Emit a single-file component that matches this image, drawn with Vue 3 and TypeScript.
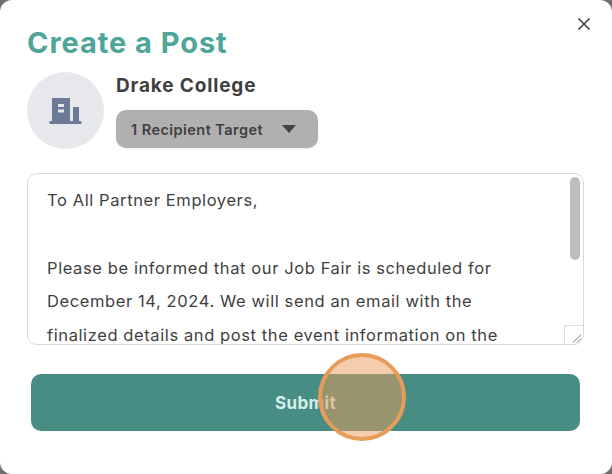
<script setup lang="ts">
const lines: string[] = [
  'To All Partner Employers,',
  '\u00a0',
  'Please be informed that our Job Fair is scheduled for',
  'December 14, 2024. We will send an email with the',
  'finalized details and post the event information on the',
]
</script>

<template>
  <div class="backdrop">
    <section class="modal">
      <button class="close" aria-label="Close">
        <svg width="14" height="14" viewBox="0 0 14 14"><path d="M1.5 1.5 12.5 12.5M12.5 1.5 1.5 12.5" stroke="#444" stroke-width="1.7" fill="none" /></svg>
      </button>
      <h1 class="title">Create a Post</h1>
      <div class="sender">
        <div class="avatar">
          <svg width="33" height="26" viewBox="0 0 33 26">
            <path fill-rule="evenodd" fill="#6b7a96" d="M3 0h18v23H3zM9 6v3h6V6zM9 11.500v3h6v-3z" />
            <rect x="24" y="9" width="6" height="14" fill="#6b7a96" />
            <rect x="0.500" y="23" width="32" height="3" rx="0.500" fill="#6b7a96" />
          </svg>
        </div>
        <div class="who">
          <div class="name">Drake College</div>
          <div class="target">
            <span>1 Recipient Target</span>
            <svg width="14" height="8" viewBox="0 0 14 8"><path d="M0 0h14L7 8z" fill="#444" /></svg>
          </div>
        </div>
      </div>
      <div class="message">
        <p v-for="(line, i) in lines" :key="i">{{ line }}</p>
        <div class="thumb"></div>
        <div class="grip">
          <svg width="18" height="18" viewBox="0 0 18 18"><path d="M8 16.500 16 8.500M12 16.500 16 12.500" stroke="#777" stroke-width="1" fill="none" /></svg>
        </div>
      </div>
      <button class="submit">Submit</button>
      <div class="pointer"></div>
    </section>
  </div>
</template>

<style>
html, body { margin: 0; background: #777; }
</style>

<style scoped>
.backdrop {
  width: 612px;
  height: 474px;
  overflow: hidden;
  background: #6e6e6e;
  font-family: "Inter", "Liberation Sans", sans-serif;
}
.modal {
  position: relative;
  box-sizing: border-box;
  height: 474px;
  padding: 24px 28px 0 27px;
  background: #fff;
  border-radius: 12px;
}
.close {
  position: absolute;
  top: 17px;
  right: 21px;
  padding: 0;
  border: 0;
  background: none;
  line-height: 0;
}
.title {
  margin: 0;
  height: 38px;
  color: #4fa598;
  font-size: 29px;
  line-height: 38px;
  font-weight: 700;
  letter-spacing: 0.95px;
}
.sender {
  display: flex;
  gap: 12px;
  margin-top: 10px;
}
.avatar {
  display: flex;
  align-items: center;
  justify-content: center;
  width: 77px;
  height: 77px;
  box-sizing: border-box;
  border-radius: 50%;
  background: #e7e8ec;
}
.who {
  display: flex;
  flex-direction: column;
  padding-top: 2px;
}
.name {
  height: 26px;
  color: #3f3f3f;
  font-size: 19px;
  line-height: 24px;
  font-weight: 700;
  letter-spacing: 0.85px;
  margin-bottom: 10px;
}
.target {
  display: flex;
  align-items: center;
  justify-content: space-between;
  box-sizing: border-box;
  width: 202px;
  height: 38px;
  padding: 0 22px 0 15px;
  border-radius: 10px;
  background: #b0b0b0;
  box-shadow: 0 1px 2px rgba(0, 0, 0, 0.08);
  color: #3f3f3f;
  font-size: 14.5px;
  font-weight: 600;
  letter-spacing: 0.45px;
}
.message {
  position: relative;
  box-sizing: border-box;
  height: 172px;
  margin-top: 24px;
  padding: 10px 19px 0 19px;
  overflow: hidden;
  border: 1px solid #d8d8d8;
  border-radius: 10px;
  color: #3f3f3f;
  font-size: 16.5px;
  letter-spacing: 0.6px;
}
.message p {
  margin: 0;
  height: 33.75px;
  line-height: 33.75px;
  white-space: nowrap;
}
.thumb {
  position: absolute;
  top: 3px;
  right: 3px;
  width: 10px;
  height: 83px;
  border-radius: 5px;
  background: #bdbdbd;
}
.grip {
  position: absolute;
  right: 0;
  bottom: 0;
  width: 18px;
  height: 18px;
  border-top: 1px solid #dcdcdc;
  border-left: 1px solid #dcdcdc;
  background: #fff;
  line-height: 0;
}
.submit {
  display: block;
  width: 549px;
  height: 57px;
  margin: 29px 0 0 4px;
  border: 0;
  border-radius: 10px;
  background: #478d83;
  color: #d5efe9;
  font-family: inherit;
  font-size: 17px;
  font-weight: 700;
  letter-spacing: 0.4px;
}
.pointer {
  position: absolute;
  left: 318px;
  top: 353px;
  box-sizing: border-box;
  width: 88px;
  height: 88px;
  border: 4px solid #e89c59;
  border-radius: 50%;
  background: rgba(232, 156, 89, 0.5);
}
</style>
